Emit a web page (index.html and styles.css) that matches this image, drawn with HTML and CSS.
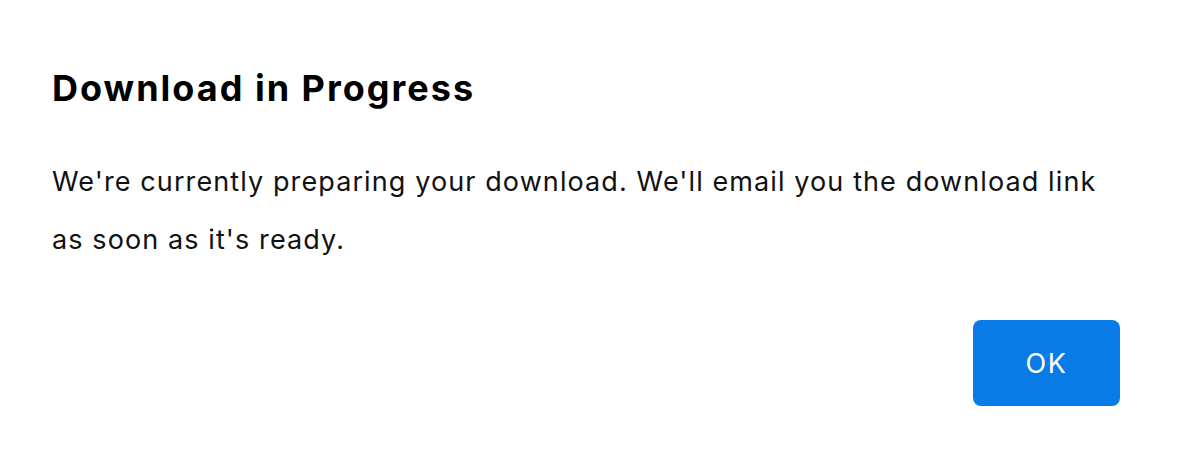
FILE: index.html
```html
<!DOCTYPE html>
<html lang="en">
<head>
    <meta charset="UTF-8">
    <title>Download in Progress</title>
    <link rel="stylesheet" href="styles.css">
</head>
<body>
    <div class="dialog">
        <h1 class="dialog-title">Download in Progress</h1>
        <p class="dialog-text">We're currently preparing your download. We'll email you the download link as soon as it's ready.</p>
        <div class="dialog-actions">
            <button type="button" class="btn">OK</button>
        </div>
    </div>
</body>
</html>
```

FILE: styles.css
```css
body {
    margin: 0;
    background-color: #fff;
    font-family: Inter, 'Noto Sans', sans-serif;
    color: #111;
}
.dialog {
    width: 1068px;
    padding: 60px 63px 0 52px;
}
.dialog-title {
    margin: 0;
    font-size: 36px;
    font-weight: 700;
    line-height: 56px;
    letter-spacing: 2px;
    color: #000;
}
.dialog-text {
    margin: 37px 0 0;
    font-size: 27px;
    line-height: 58px;
    letter-spacing: 1.1px;
}
.dialog-actions {
    display: flex;
    justify-content: flex-end;
    margin-top: 51px;
}
.btn {
    width: 147px;
    height: 86px;
    border: none;
    border-radius: 8px;
    background-color: #087be6;
    color: #fff;
    font-family: inherit;
    font-size: 27px;
    letter-spacing: 1.5px;
    cursor: pointer;
}
```
